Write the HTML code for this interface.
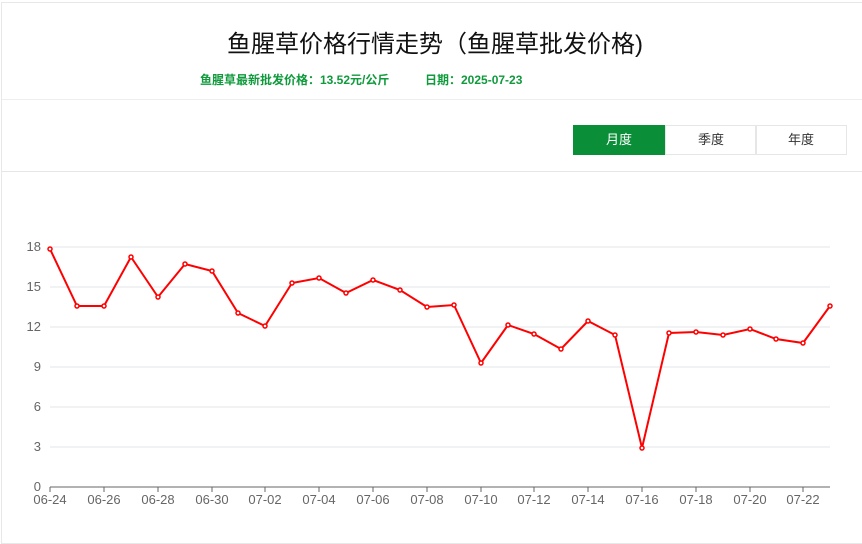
<!DOCTYPE html><html><head><meta charset="utf-8"><style>
body{margin:0;width:862px;height:518px;overflow:hidden;background:#fff;font-family:"Liberation Sans","Noto Sans CJK SC",sans-serif}
.box{position:absolute;left:1px;top:2px;width:870px;height:540px;border:1px solid #e8e8e8}
.h{position:absolute;left:0;top:0;width:862px;text-align:center}
</style></head><body>
<div class="box"></div>
<div style="position:absolute;left:2px;top:99px;width:860px;height:1px;background:#eee"></div>
<div style="position:absolute;left:2px;top:171px;width:860px;height:1px;background:#e6e6e6"></div>
<div class="h" style="top:24px;font-size:24px;color:#111;left:4px">鱼腥草价格行情走势（鱼腥草批发价格)</div>
<div style="position:absolute;left:200px;top:71px;font-size:12px;font-weight:bold;color:#0f9a3c">鱼腥草最新批发价格：13.52元/公斤</div>
<div style="position:absolute;left:425px;top:71px;font-size:12px;font-weight:bold;color:#0f9a3c">日期：2025-07-23</div>
<div style="position:absolute;left:573px;top:125px;width:92px;height:30px;background:#0b8e38;color:#fff;font-size:13px;line-height:30px;text-align:center">月度</div>
<div style="position:absolute;left:665px;top:125px;width:90px;height:28px;border:1px solid #e6e6e6;font-size:13px;line-height:28px;text-align:center;color:#333">季度</div>
<div style="position:absolute;left:755px;top:125px;width:90px;height:28px;border:1px solid #e6e6e6;font-size:13px;line-height:28px;text-align:center;color:#333">年度</div>
<svg width="862" height="518" style="position:absolute;left:0;top:0" font-family="Liberation Sans,sans-serif" font-size="13" fill="#666">
<g stroke="#e3e6ea"><line x1="50" x2="830" y1="247" y2="247"/><line x1="50" x2="830" y1="287" y2="287"/><line x1="50" x2="830" y1="327" y2="327"/><line x1="50" x2="830" y1="367" y2="367"/><line x1="50" x2="830" y1="407" y2="407"/><line x1="50" x2="830" y1="447" y2="447"/></g>
<line x1="50" x2="830" y1="487" y2="487" stroke="#666"/>
<g text-anchor="end"><text x="41" y="251">18</text><text x="41" y="291">15</text><text x="41" y="331">12</text><text x="41" y="371">9</text><text x="41" y="411">6</text><text x="41" y="451">3</text><text x="41" y="491">0</text></g>
<g stroke="#666"><line x1="50" x2="50" y1="487" y2="492"/><line x1="104" x2="104" y1="487" y2="492"/><line x1="158" x2="158" y1="487" y2="492"/><line x1="212" x2="212" y1="487" y2="492"/><line x1="265" x2="265" y1="487" y2="492"/><line x1="319" x2="319" y1="487" y2="492"/><line x1="373" x2="373" y1="487" y2="492"/><line x1="427" x2="427" y1="487" y2="492"/><line x1="481" x2="481" y1="487" y2="492"/><line x1="534" x2="534" y1="487" y2="492"/><line x1="588" x2="588" y1="487" y2="492"/><line x1="642" x2="642" y1="487" y2="492"/><line x1="696" x2="696" y1="487" y2="492"/><line x1="750" x2="750" y1="487" y2="492"/><line x1="803" x2="803" y1="487" y2="492"/></g>
<g text-anchor="middle"><text x="50" y="504">06-24</text><text x="104" y="504">06-26</text><text x="158" y="504">06-28</text><text x="212" y="504">06-30</text><text x="265" y="504">07-02</text><text x="319" y="504">07-04</text><text x="373" y="504">07-06</text><text x="427" y="504">07-08</text><text x="481" y="504">07-10</text><text x="534" y="504">07-12</text><text x="588" y="504">07-14</text><text x="642" y="504">07-16</text><text x="696" y="504">07-18</text><text x="750" y="504">07-20</text><text x="803" y="504">07-22</text></g>
<polyline fill="none" stroke="#f00" stroke-width="2" points="50,249 77,306 104,306 131,257 158,297 185,264 212,271 238,313 265,326 292,283 319,278 346,293 373,280 400,290 427,307 454,305 481,363 508,325 534,334 561,349 588,321 615,335 642,448 669,333 696,332 723,335 750,329 776,339 803,343 830,306"/>
<g fill="#fff" stroke="#f00" stroke-width="1.5">
<circle cx="50" cy="249" r="2"/><circle cx="77" cy="306" r="2"/><circle cx="104" cy="306" r="2"/><circle cx="131" cy="257" r="2"/><circle cx="158" cy="297" r="2"/><circle cx="185" cy="264" r="2"/><circle cx="212" cy="271" r="2"/><circle cx="238" cy="313" r="2"/><circle cx="265" cy="326" r="2"/><circle cx="292" cy="283" r="2"/><circle cx="319" cy="278" r="2"/><circle cx="346" cy="293" r="2"/><circle cx="373" cy="280" r="2"/><circle cx="400" cy="290" r="2"/><circle cx="427" cy="307" r="2"/><circle cx="454" cy="305" r="2"/><circle cx="481" cy="363" r="2"/><circle cx="508" cy="325" r="2"/><circle cx="534" cy="334" r="2"/><circle cx="561" cy="349" r="2"/><circle cx="588" cy="321" r="2"/><circle cx="615" cy="335" r="2"/><circle cx="642" cy="448" r="2"/><circle cx="669" cy="333" r="2"/><circle cx="696" cy="332" r="2"/><circle cx="723" cy="335" r="2"/><circle cx="750" cy="329" r="2"/><circle cx="776" cy="339" r="2"/><circle cx="803" cy="343" r="2"/><circle cx="830" cy="306" r="2"/></g>
</svg>
</body></html>
